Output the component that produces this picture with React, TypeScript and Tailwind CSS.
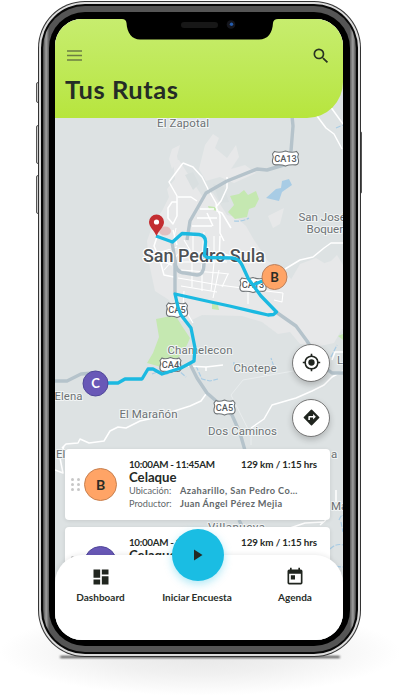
import React from 'react';

const Shield = ({ x, y, w, label }: { x: number; y: number; w: number; label: string }) => (
  <g transform={`translate(${x} ${y})`}>
    <path
      d={`M${-w / 2 + 2} -7 Q${-w / 4} -5.2 0 -7.5 Q${w / 4} -5.2 ${w / 2 - 2} -7 L${w / 2} -4.5 Q${w / 2 - 1.6} -1.5 ${w / 2} 1.5 Q${w / 2 + 0.6} 6 ${w / 2 - 3} 6.4 Q4 5.8 0 7.6 Q-4 5.8 ${-w / 2 + 3} 6.4 Q${-w / 2 - 0.6} 6 ${-w / 2} 1.5 Q${-w / 2 + 1.6} -1.5 ${-w / 2} -4.5Z`}
      fill="#fff"
      stroke="#6f7477"
      strokeWidth="1.1"
    />
    <text y="3.4" textAnchor="middle" fontSize="9.2" fontWeight="500" fill="#55595c">{label}</text>
  </g>
);

const Place = ({ x, y, w, children, size = 11.5 }: { x: number; y: number; w?: number; children: string; size?: number }) => (
  <text x={x} y={y} fontSize={size} textLength={w} fill="#6d7275" stroke="#f1f4f4" strokeWidth="2.2" strokeLinejoin="round" paintOrder="stroke">
    {children}
  </text>
);

const MapLayer = () => (
  <svg className="absolute inset-0 h-full w-full font-['Roboto',sans-serif]" viewBox="55 19 288 621" preserveAspectRatio="none">
    <rect x="55" y="19" width="288" height="621" fill="#dde2e3" />
    <g fill="#e7e8e9">
      <path d="M179 160q-7 0-5 9l1 10-8 10 2 8-7 14-8 10-7 20 2 22 6 28 14 9 12 21h9l12-6 40 1 20 6 16 12 12-2 10 12 20 2 14-3 8-14 13-3 8-14-5-20-9-5-3-17-9-15-6 6-19 6-10 13-10 0-12-13-12-6-8-12-6-9-8-14-10-9-9-2-14-22-11 3z" />
      <path d="M205 145l8-11 6 4-4 10 12 10 9-13 3 12-8 12 14-4 11 8-22 10-14-6-14 4-7-12zM268 216l16-8-4 16-7 4zM180 145l-8 4-3 10 3 10 6-8-1-5z" />
      <path d="M300 264l16-6 13 8 5 19-9 13-6 19-17 15-20-4-8-20 12-20z" />
    </g>
    <path d="M185 175l8-3 6 12-6 6zM213 184l11 3 5 15-9 1z" fill="#d9dfe0" />
    <g fill="#c5e8b1">
      <path d="M230 196l9-2 5-4 4 5 8-4 3 8-4 8-6 2-2 8-12 2-7-7 6-7zM208 206l7 1 2 4-8-2zM212 303l6 2 1 5-7-1zM338 336l5-2v6z" />
      <path d="M156 319l15-3 6 2 5 8 8 12-3 7-8 12-18 10-14-4 6-10 6-16z" />
    </g>
    <path d="M266 198l10-9 5-1 1-7 7-2 3 6-10 7-3 9z" fill="#a8cce5" />
    <g fill="none" stroke="#a8cce5" strokeWidth="1.2">
      <path d="M234 221q8 1 15-3M336 128l7-3M331 357l6-12M196 366l6 13 8 2 8-2M234 362q-1 7 5 3l14 2q5-2 9 1l12-1-3-9M339 520q3-7 4-4M330 549q6-6 13-4M323 565l20 2M152 374l8-3 7 3 10-5 9 8M341 522l2 10" strokeDasharray="5 1.5" />
    </g>
    <g fill="none" stroke="#fff" strokeWidth="1.5" strokeLinejoin="round">
      <path d="M183 163l10 4 9 10 6 12 8 14 1 8 5 2 9 15M183 163l-14 19 8 14v20l-4 8-5-6v-10l4-6h5M178 197h13l6 4M227 177v11l-6 13-5 6 4 8v18l4 8M317 116l9 12 8 6 8 15M330 106l13 18" />
      <path d="M285 269l15-9 13-3 11-9 7-5h12M157 237l-3 9 6 14 12 5M160 260l4 15 10 2M173 230l4 15M207 213l6 13M200 209h14M197 218h20M192 226h20M218 252l12 4 10 7M220 236l-1 27" />
      <path d="M179 262h48M181 270l39 3 9 1M178 278l41 7 31 4 33 4M181 286l36 6M184 291l-1 15 10 17M192 263v24M202 264v27M214 263l-3 28M219 270l-6 28M228 274l-6 13M248 287v17M283 293l-1 9-8-2M175 300l8 12M184 240l12 20M193 232v29M204 232l-2 27M214 236v28M176 228l-6 30M164 270l16-18M158 253l19-6" strokeWidth="1.1" />
      <path d="M62 448l4-4 12-1 2-4 9 4 15-2 6-10 8-4 8 1 14-7 9-2 16-5 25-8 11-5 5-7M343 371l-11 6-8 8-12 6-16 7-24 7-8 14-13 9M55 470l8 3-3-15 4-12M188 366l18 1v4M206 367l17-2M270 536l20-8 15-5 18-1M320 525l6-5M336 490v12" />
      <path d="M343 352h-8l-3 8" />
    </g>
    <g fill="none" stroke="#e9edee" strokeWidth="1">
      <path d="M251 445v-10l-20-40 12-15 50-9" />
    </g>
    <g fill="none" stroke="#b5c3cb" strokeLinejoin="round" strokeWidth="3.4">
      <path d="M292 116l1 10-2 25-4 13-20 6-10-1-30 12-21 12-16 28-3 19M172 242l3 19v33" />
      <path d="M175 260q0 13 10 13l12 2q7 0 7-12V252" />
      <path d="M276 312l20 14 11 15 15 24 10 8h11M55 381h12l14-7 12-1M190 364l7 14 10 15 16 14 9 8 8 18 6 21M239 520l3 6" />
    </g>
    <Place x={157} y={126.5} w={52}>El Zapotal</Place>
    <Place x={298.5} y={220.5}>San José</Place>
    <Place x={306.5} y={232.5}>Boquerón</Place>
    <Place x={167.5} y={354} w={65}>Chamelecon</Place>
    <Place x={233.5} y={371.5} w={43}>Chotepe</Place>
    <Place x={54.5} y={399.5} w={28}>Elena</Place>
    <Place x={119.5} y={417.5} w={58}>El Marañón</Place>
    <Place x={208} y={434.5} w={69}>Dos Caminos</Place>
    <Place x={56} y={457.5}>El</Place>
    <Place x={337} y={364}>La</Place>
    <Place x={331} y={457.5}>a</Place>
    <Place x={331} y={509.5}>Ma</Place>
    <Place x={208} y={530.5} w={57}>Villanueva</Place>
    <text x="143" y="261.5" fontSize="17.5" fontWeight="500" textLength="122" lengthAdjust="spacingAndGlyphs" fill="#4e5255" stroke="#fff" strokeWidth="2.5" strokeLinejoin="round" paintOrder="stroke">San Pedro Sula</text>
    <Shield x={285.5} y={158.5} w={26} label="CA13" />
    <Shield x={253} y={285} w={26} label="CA13" />
    <Shield x={177} y={310} w={21} label="CA5" />
    <Shield x={170.5} y={365} w={21} label="CA4" />
    <Shield x={224.5} y={407.5} w={21} label="CA5" />
    <ellipse cx="165" cy="231" rx="6" ry="4.5" fill="#d9585b" opacity=".28" />
    <path d="M156 236L172.500 242 182 233.500 199 234.500Q206 235.500 205.500 242.500L204.500 255.500 207 257.500 232 258Q239 258.500 242 265L248.500 279 261 296 276.500 312 273.500 314.500 268 315 229.500 306 211 302 175 294 178 307 181 315 191 328 195 348 194 361 181 368 162 374 153 369 148 369 142 379 125 379 118 383H106M253 285L265 280" fill="none" stroke="#1bb9e1" strokeWidth="3.300" strokeLinejoin="round" />
    <path d="M156.500 236C154 230 149 227 149 222a7.500 7.500 0 0 1 15 0c0 5-5 8-7.500 14z" fill="#c32d31" />
    <circle cx="156.500" cy="222" r="2.600" fill="#fff" />
    <circle cx="274.500" cy="277" r="12.500" fill="#ffa466" stroke="#bb805c" />
    <circle cx="95.500" cy="383.500" r="12.500" fill="#6958b7" stroke="#4f4699" />
    <g fontFamily="Lato" fontWeight="700" fontSize="13" textAnchor="middle">
      <text x="274.500" y="281.500" fill="#2b2c25">B</text>
      <text x="95.500" y="388" fill="#fff">C</text>
    </g>
  </svg>
);

const Grip = () => (
  <span className="grid w-[9px] grid-cols-2 gap-x-[2px] gap-y-[2px]">
    {[0, 1, 2, 3, 4, 5].map((n) => <i key={n} className="size-[3px] rounded-full bg-[#c7c7c7]" />)}
  </span>
);

const RouteCard = ({ letter, badge }: { letter: string; badge: string }) => (
  <article className="flex h-[71px] items-center rounded-[4px] bg-white pl-[6px] shadow-[0_1px_4px_rgba(0,0,0,0.1)]">
    <Grip />
    <span className={`ml-[4px] flex size-[33px] shrink-0 items-center justify-center rounded-full border text-[14px] font-bold ${badge}`}>{letter}</span>
    <div className="ml-[12px] h-[71px] flex-1 pr-[13px] pt-[9px] text-[#252a26]">
      <div className="flex h-[13px] justify-between whitespace-nowrap text-[9.800px] font-bold leading-[13px]">
        <span className="tracking-[-0.320px]">10:00AM - 11:45AM</span>
        <span className="tracking-[-0.100px]">129 km / 1:15 hrs</span>
      </div>
      <h2 className="h-[13px] text-[13.200px] font-bold leading-[12px]">Celaque</h2>
      <dl className="grid grid-cols-[51px_1fr] whitespace-nowrap text-[9.200px] leading-[13px] text-[#62676a]">
        <dt>Ubicación:</dt><dd className="font-bold tracking-[0.430px]">Azaharillo, San Pedro Co…</dd>
        <dt>Productor:</dt><dd className="font-bold tracking-[0.370px]">Juan Ángel Pérez Mejia</dd>
      </dl>
    </div>
  </article>
);

export default function App() {
  return (
    <div className="relative h-[695px] w-[400px] overflow-hidden bg-white font-['Lato',sans-serif]">
      <div className="absolute inset-x-0 bottom-0 h-[90px] bg-[radial-gradient(ellipse_200px_44px_at_50%_52%,#e6e6e6_0%,#f0f0f0_50%,#ffffff_100%)]" />
      <div className="absolute left-[60px] top-[656px] h-[2px] w-[280px] rounded-full bg-[#444] blur-[1px]" />
      <i className="absolute left-[36px] top-[82px] h-[21px] w-[4px] rounded-l-[2px] border border-[#555] bg-[#ccc]" />
      <i className="absolute left-[36px] top-[125px] h-[39px] w-[4px] rounded-l-[2px] border border-[#555] bg-[#ccc]" />
      <i className="absolute left-[36px] top-[175px] h-[39px] w-[4px] rounded-l-[2px] border border-[#555] bg-[#ccc]" />
      <i className="absolute left-[359px] top-[131px] h-[63px] w-[3px] rounded-r-[2px] border border-[#555] bg-[#ccc]" />
      <div className="relative ml-[38px] w-[323px] pt-px">
        <div className="rounded-[47px] bg-[#333] p-[1px]">
          <div className="rounded-[46px] bg-[#dcdcdc] p-[2px]">
            <div className="rounded-[44px] bg-[#080808] p-[2px]">
              <div className="rounded-[42px] bg-[linear-gradient(90deg,#464646,#a0a0a0_1%,#555_2%,#555_98%,#a0a0a0_99%,#464646)] p-[6px]">
                <div className="rounded-[36px] bg-black pb-[6px] pl-[6px] pr-[7px] pt-[6.500px]">
                  <div className="relative flex h-[621px] flex-col overflow-hidden rounded-[27px] bg-[#dde2e3]">
                    <MapLayer />
                    <header className="relative h-[99px] rounded-br-[36px] bg-linear-to-b from-[#c7ed6e] to-[#b7e53c] px-[10px] pt-[29px]">
                      <div className="flex h-[16px] items-center justify-between pl-[2px] pr-[2px]">
                        <svg className="h-[11px] w-[15px]" viewBox="0 0 15 11"><path d="M0 1h15M0 5.500h15M0 10h15" stroke="#6b7d43" strokeWidth="1.700" /></svg>
                        <svg className="size-[20px]" viewBox="0 0 24 24" fill="#293322"><path d="M15.500 14h-.79l-.28-.27A6.471 6.471 0 0 0 16 9.500 6.500 6.500 0 1 0 9.500 16c1.610 0 3.090-.59 4.230-1.570l.27.28v.79l5 4.990L20.490 19l-4.990-5zm-6 0C7.010 14 5 11.990 5 9.500S7.010 5 9.500 5 14 7.010 14 9.500 11.990 14 9.500 14z" /></svg>
                      </div>
                      <h1 className="mt-[10.500px] text-[25.500px] font-bold leading-[30px] tracking-[0.550px] text-[#252c26]">Tus Rutas</h1>
                    </header>
                    <svg className="absolute left-[67px] top-0 h-[21px] w-[156px]" viewBox="0 0 156 21">
                      <path d="M0 0Q4 0 4.500 4C5 14 10 20.500 18 20.500H137C146 20.500 150.500 14 151 4Q151.500 0 156 0Z" fill="#000" />
                      <rect x="59" y="3" width="37" height="6" rx="3" fill="#171717" />
                      <circle cx="109" cy="5.500" r="4.300" fill="#15161d" /><circle cx="109.500" cy="5.200" r="1.700" fill="#245cae" />
                    </svg>
                    <div className="relative flex flex-1 flex-col items-end gap-[17px] pr-[13px] pt-[226px]">
                      <button className="flex size-[38px] items-center justify-center rounded-full border border-[#777] bg-white shadow-[0_3px_6px_rgba(0,0,0,0.2)]">
                        <svg className="size-[19px]" viewBox="0 0 24 24" fill="#20251f"><circle cx="12" cy="12" r="4" /><path d="M20.940 11A8.994 8.994 0 0 0 13 3.060V1h-2v2.060A8.994 8.994 0 0 0 3.060 11H1v2h2.060A8.994 8.994 0 0 0 11 20.940V23h2v-2.060A8.994 8.994 0 0 0 20.940 13H23v-2h-2.060zM12 19a7 7 0 1 1 0-14 7 7 0 0 1 0 14z" /></svg>
                      </button>
                      <button className="flex size-[38px] items-center justify-center rounded-full border border-[#777] bg-white shadow-[0_3px_6px_rgba(0,0,0,0.2)]">
                        <svg className="size-[19px]" viewBox="0 0 24 24" fill="#20251f"><path d="M21.710 11.290l-9-9a1 1 0 0 0-1.410 0l-9 9a1 1 0 0 0 0 1.410l9 9a1 1 0 0 0 1.410 0l9-9a1 1 0 0 0 0-1.410zM14 14.500V12h-4v3H8v-4a1 1 0 0 1 1-1h5V7.500l3.500 3.500-3.500 3.500z" /></svg>
                      </button>
                    </div>
                    <section className="relative -mb-[43px] ml-[10px] mr-[13px] flex flex-col gap-[7px]">
                      <RouteCard letter="B" badge="bg-[#ffa466] border-[#c7804f] text-[#2b2c25]" />
                      <RouteCard letter="C" badge="bg-[#6958b7] border-[#4f4699] text-white" />
                    </section>
                    <nav className="relative h-[85px] shrink-0 rounded-t-[28px] bg-white text-[10px] font-bold text-[#292e2a] shadow-[0_-1px_5px_rgba(0,0,0,0.08)]">
                      <div className="flex pl-[21px] pt-[12px]">
                        <div className="flex w-[49px] flex-col items-center">
                          <svg className="size-[20px]" viewBox="0 0 24 24" fill="#20251f"><path d="M3 13h8V3H3v10zm0 8h8v-6H3v6zm10 0h8V11h-8v10zm0-18v6h8V3h-8z" /></svg>
                          <span className="mt-[4px] leading-[12px]">Dashboard</span>
                        </div>
                        <div className="ml-[34px] flex w-[76px] flex-col items-center pt-[24px]"><span className="whitespace-nowrap leading-[12px]">Iniciar Encuesta</span></div>
                        <div className="ml-[42px] flex w-[36px] flex-col items-center">
                          <svg className="size-[20px]" viewBox="0 0 24 24" fill="#20251f"><path d="M19 3h-1V1h-2v2H8V1H6v2H5a2 2 0 0 0-2 2v14a2 2 0 0 0 2 2h14a2 2 0 0 0 2-2V5a2 2 0 0 0-2-2zm0 16H5V8h14v11zM7 10h5v5H7z" /></svg>
                          <span className="mt-[4px] leading-[12px]">Agenda</span>
                        </div>
                      </div>
                      <button className="absolute -top-[26px] left-[116.500px] flex size-[52px] items-center justify-center rounded-full bg-[#1abde3] shadow-[0_3px_8px_rgba(26,189,227,0.35)]">
                        <svg className="h-[12px] w-[10px]" viewBox="0 0 10 12"><path d="M1 .5L9.500 6 1 11.500Z" fill="#242a25" /></svg>
                      </button>
                    </nav>
                  </div>
                </div>
              </div>
            </div>
          </div>
        </div>
      </div>
    </div>
  );
}
